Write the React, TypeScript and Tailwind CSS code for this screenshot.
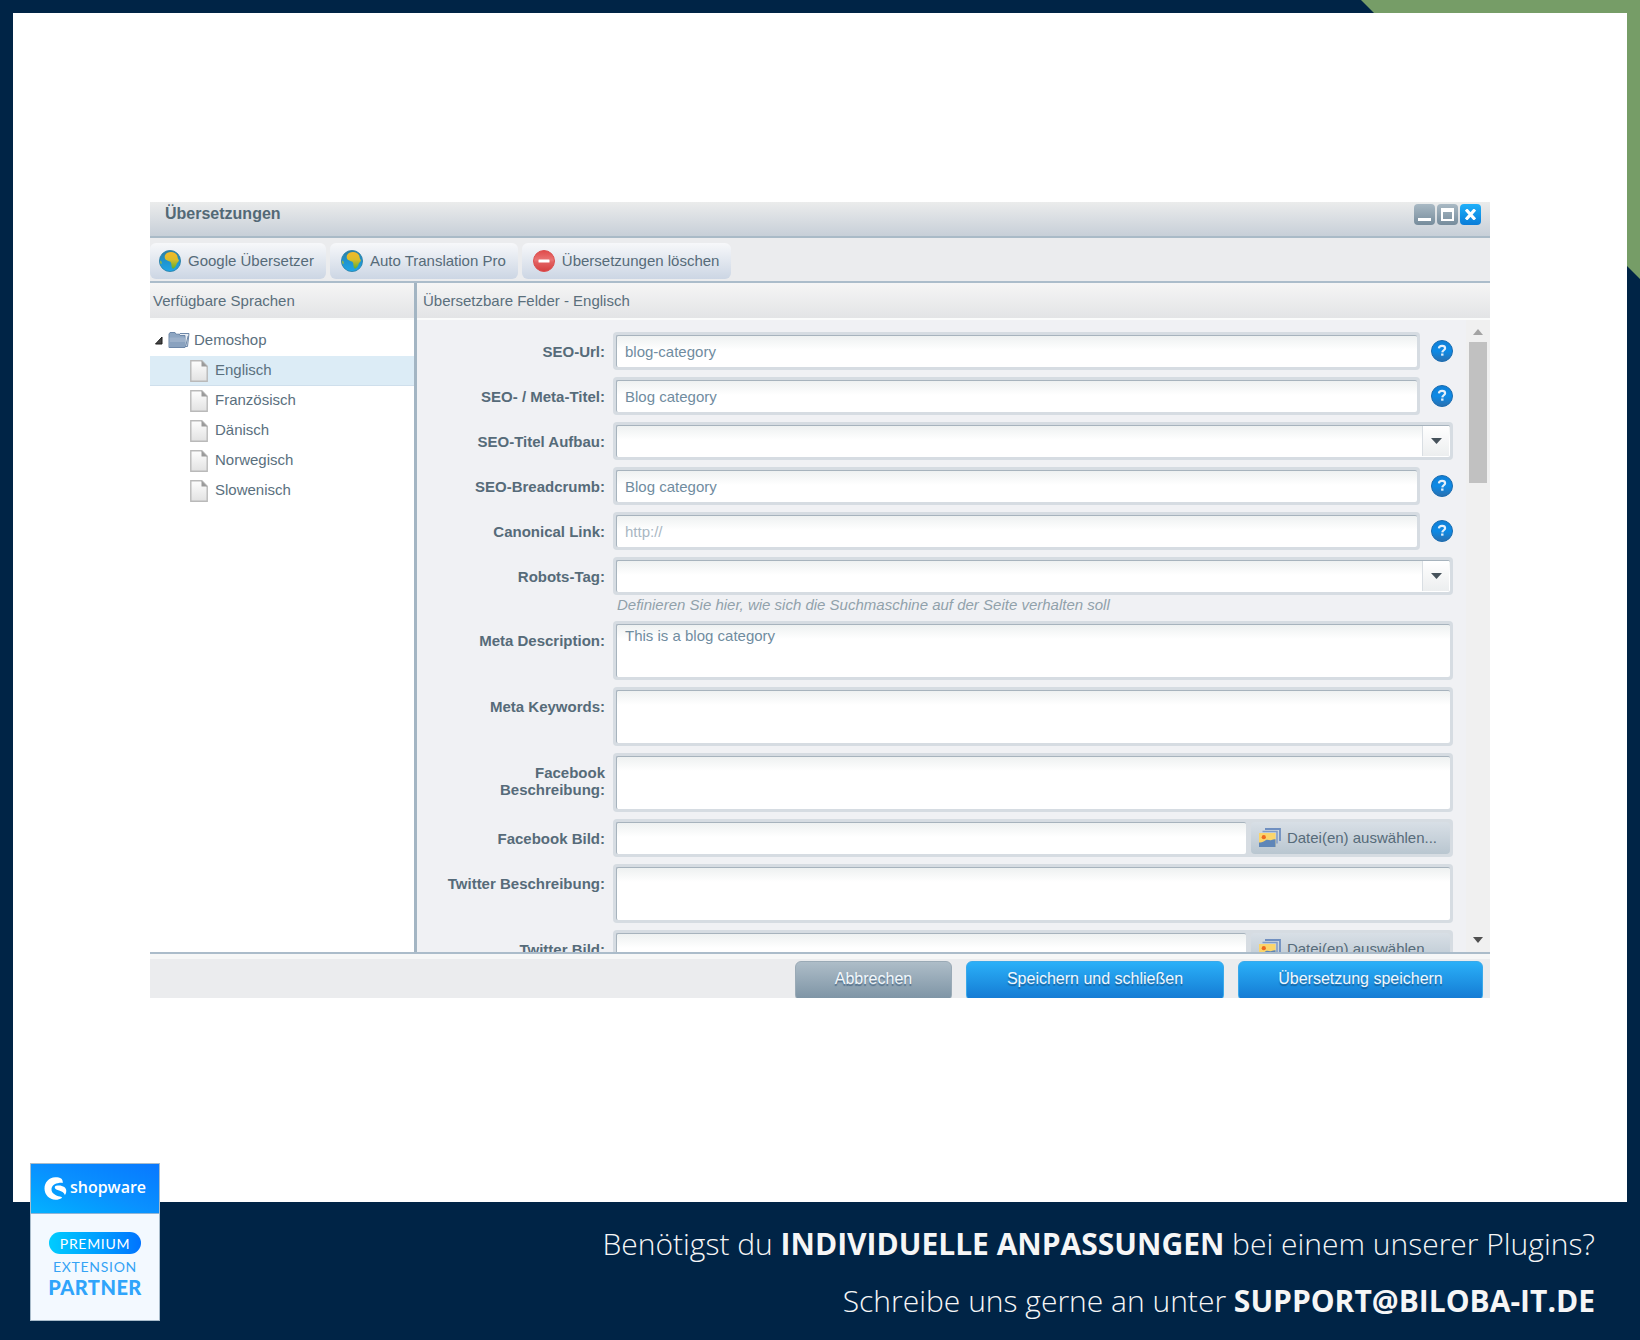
import { useState } from "react";
import type { ReactNode } from "react";

const languages = ["Englisch", "Französisch", "Dänisch", "Norwegisch", "Slowenisch"];

// --- ICONS ---

function GlobeIcon() {
  return (
    <svg width="22" height="22" viewBox="0 0 22 22" aria-hidden="true">
      <defs>
        <linearGradient id="globe-sea" x1="0" y1="0" x2="0" y2="1">
          <stop offset="0" stopColor="#2f7f9f" />
          <stop offset="0.5" stopColor="#1f93cf" />
          <stop offset="1" stopColor="#1fa5e6" />
        </linearGradient>
        <linearGradient id="globe-land" x1="0" y1="0" x2="0" y2="1">
          <stop offset="0" stopColor="#f3b92a" />
          <stop offset="0.45" stopColor="#dcbd2a" />
          <stop offset="1" stopColor="#5fae2e" />
        </linearGradient>
      </defs>
      <circle cx="11" cy="11" r="10.6" fill="url(#globe-sea)" stroke="#2a7fa6" strokeWidth="0.8" />
      <path
        d="M6 5.200C7.200 2.800 9.400 2 12 2c3 0 5 1.300 6.200 3.400l.8 3.600.9.900c.1 1.300-1 2.500-2 3.400-.4 1.800-1.300 3.700-3.100 5.100-1.300.6-2-.5-2.200-1.900l-.4-3.300c-.3-1.200-1.100-1.900-2.300-2L6.800 9.800C5.600 8.700 5.400 6.800 6 5.200z"
        fill="url(#globe-land)"
      />
      <path d="M1.200 10.500c1.100.4 1.700 1.500 1.500 3l-.7.8C1.200 13.400 1 12.200 1.200 10.500z" fill="#9db93a" />
    </svg>
  );
}

function DeleteIcon() {
  return (
    <svg width="22" height="22" viewBox="0 0 22 22" aria-hidden="true">
      <defs>
        <linearGradient id="delete-red" x1="0" y1="0" x2="0" y2="1">
          <stop offset="0" stopColor="#e04a4a" />
          <stop offset="0.45" stopColor="#e97474" />
          <stop offset="0.55" stopColor="#e26161" />
          <stop offset="1" stopColor="#d43f3f" />
        </linearGradient>
      </defs>
      <circle cx="11" cy="11" r="10.5" fill="url(#delete-red)" stroke="#dc5050" />
      <rect x="5.5" y="9.6" width="11" height="2.8" rx="0.5" fill="#fff" />
    </svg>
  );
}

function HelpIcon() {
  return (
    <svg width="22" height="22" viewBox="0 0 22 22" aria-hidden="true">
      <defs>
        <linearGradient id="help-blue" x1="0" y1="0" x2="0" y2="1">
          <stop offset="0" stopColor="#0f7fd6" />
          <stop offset="0.5" stopColor="#0d8ae6" />
          <stop offset="1" stopColor="#2a6fae" />
        </linearGradient>
      </defs>
      <circle cx="11" cy="11" r="10.5" fill="url(#help-blue)" stroke="#1a6cb0" />
      <path
        d="M7.9 8.4c.1-1.700 1.400-2.500 3.200-2.500s3 .9 3 2.300c0 2-2.700 2.100-2.800 4.200"
        fill="none"
        stroke="#e3effa"
        strokeWidth="2.200"
      />
      <rect x="10.100" y="13.500" width="2.400" height="2.200" fill="#e3effa" />
    </svg>
  );
}

function FolderIcon() {
  return (
    <svg width="22" height="18" viewBox="0 0 22 18" aria-hidden="true">
      <path d="M9 4.500h2l1-2h9l-1.500 13H16" fill="#e9eef4" stroke="#6d87a8" />
      <path d="M1 16.500V3l1-1.500h5l1 1.700h3l1 1.300h5v12z" fill="#8ea6c2" stroke="#6d87a8" />
      <path d="M1.500 6.500h15.500v9.500H1.500z" fill="#9db1ca" />
      <path d="M1.500 11h15.500v5H1.500z" fill="#8aa2bf" />
      <path d="M17.500 16l2.600-11" fill="none" stroke="#6d87a8" />
    </svg>
  );
}

function FileIcon() {
  return (
    <svg width="18" height="22" viewBox="0 0 18 22" aria-hidden="true">
      <defs>
        <linearGradient id="file-page" x1="0" y1="0" x2="0" y2="1">
          <stop offset="0" stopColor="#fdfdfd" />
          <stop offset="1" stopColor="#e2e2e2" />
        </linearGradient>
      </defs>
      <path d="M0.8 0.8h11l5.400 5.600v14.800H0.8z" fill="url(#file-page)" stroke="#b9b9b9" strokeWidth="1.400" />
      <path d="M11.500 0.8v5.800h5.700z" fill="#9a9a9a" />
    </svg>
  );
}

function ImagesIcon() {
  return (
    <svg width="22" height="20" viewBox="0 0 22 20" aria-hidden="true">
      <path d="M6 1h15v12" fill="none" stroke="#6f8fc0" strokeWidth="1.800" />
      <path d="M3.500 3.600h14.500v12" fill="none" stroke="#7f9bc8" strokeWidth="1.500" />
      <rect x="0" y="5" width="16.500" height="14" fill="#fbd56b" />
      <circle cx="4.800" cy="9.200" r="2.100" fill="#ee6a1f" />
      <path d="M0 14.500c3 .5 4.500-1 7-2.400 2-.9 3.600.6 5.500-.1 1.500-.5 2.600-.9 4-.7V19H0z" fill="#5f86b8" />
    </svg>
  );
}

function ShopwareMark() {
  return (
    <svg width="23" height="23" viewBox="0 0 23 23" aria-hidden="true">
      <path
        d="M17.500 1.700C15.500.6 13.400.2 11.200.3 5 .6.500 5.300.500 11.500c0 6.400 4.900 11.200 11 11.200 2.400 0 4.500-.6 6.300-1.800.3-.3.2-.6-.3-.9-2-.6-4.200-1-6-2-2.600-1.300-4.300-3.300-4-6.200.4-3.500 3.800-5.700 7.500-5.900 1.300-.1 2.600 0 3.700.2.300-1.600-.2-3.300-1.200-4.400z"
        fill="#fff"
      />
      <path
        d="M12 8.800c3-.8 6-.4 8.300 1.200 1.500 1.200 2.300 3 1.900 5-.2 1.400-.8 2.400-1.300 3-1-2.700-3.200-3.500-5.800-4.400-2-.7-4-1.500-4.300-2.900-.1-.9.300-1.600 1.200-1.900z"
        fill="#fff"
      />
    </svg>
  );
}

// --- FORM ---

interface FieldRowProps {
  id: string;
  label: string;
  children: ReactNode;
}

function FieldRow({ id, label, children }: FieldRowProps) {
  return (
    <div className="flex items-start gap-2">
      <label htmlFor={id} className="w-[188px] shrink-0 pl-6 pt-[11px] text-right font-bold leading-[17px] text-[#566b79]">
        {label}
      </label>
      <div className="flex min-w-0 flex-1 items-start gap-[11px]">{children}</div>
    </div>
  );
}

const frame = "flex min-w-0 flex-1 rounded bg-[#d6dce2] p-[3px]";
const control =
  "block w-full min-w-0 rounded-[2px] border-l border-t border-[#a7b3bd] bg-[linear-gradient(#eef1f1,#ffffff_14px)] px-2 text-[#708c9f] outline-none placeholder:text-[#a9b7c3]";

interface TextFieldProps {
  id: string;
  label: string;
  value?: string;
  placeholder?: string;
}

function TextField({ id, label, value, placeholder }: TextFieldProps) {
  return (
    <FieldRow id={id} label={label}>
      <div className={frame}>
        <input id={id} type="text" defaultValue={value} placeholder={placeholder} className={`${control} h-8`} />
      </div>
      <button type="button" aria-label={`Hilfe: ${label}`} className="mt-2 shrink-0">
        <HelpIcon />
      </button>
    </FieldRow>
  );
}

function SelectField({ id, label }: TextFieldProps) {
  return (
    <FieldRow id={id} label={label}>
      <div className={`${frame} relative`}>
        <select id={id} className={`${control} h-8 appearance-none`} />
        <span className="pointer-events-none absolute bottom-1 right-1 top-1 flex w-[27px] items-center justify-center border-l border-[#d9dee3] bg-linear-to-b from-white to-[#eceeef]">
          <svg width="11" height="6" viewBox="0 0 11 6" aria-hidden="true">
            <path d="M0 0h11L5.500 6z" fill="#46525b" />
          </svg>
        </span>
      </div>
    </FieldRow>
  );
}

function AreaField({ id, label, value }: TextFieldProps) {
  return (
    <FieldRow id={id} label={label}>
      <div className={frame}>
        <textarea id={id} defaultValue={value} className={`${control} h-[53px] resize-none pt-[2px] leading-[18px]`} />
      </div>
    </FieldRow>
  );
}

function MediaField({ id, label }: TextFieldProps) {
  return (
    <FieldRow id={id} label={label}>
      <div className={`${frame} gap-[5px]`}>
        <input id={id} type="text" className={`${control} h-8`} />
        <button
          type="button"
          className="flex h-8 shrink-0 items-center gap-[6px] rounded bg-linear-to-b from-[#d8dfe6] to-[#b9c6d0] pl-2 pr-[13px] text-[#566b79]"
        >
          <ImagesIcon />
          Datei(en) auswählen...
        </button>
      </div>
    </FieldRow>
  );
}

// --- WINDOW ---

const toolButton =
  "flex h-9 items-center gap-[7px] rounded-md bg-linear-to-b from-[#f7f8fa] to-[#ccd6e4] pr-3 text-[#566b79]";
const panelHeader =
  "flex h-[37px] items-center border-b-2 border-[#fafbfb] bg-linear-to-b from-[#f5f5f5] to-[#e3e4e6] pt-[2px] font-normal text-[#5a6f7c]";
const windowButton = "flex h-[21px] w-[21px] items-center justify-center rounded-[4px]";
const footerButton =
  "h-10 rounded-md border pb-1 text-base text-[#f2f7fb] [text-shadow:0_2px_1px_rgba(20,60,100,0.5)]";

function TranslationWindow() {
  const [language, setLanguage] = useState("Englisch");

  return (
    <section className="mx-[137px] flex flex-col overflow-hidden bg-[#ebecee] text-[15px]">
      <header className="flex h-9 items-start justify-between border-b-2 border-[#a9bac7] bg-linear-to-b from-[#ebecec] to-[#c7cfd8] pl-[15px] pr-[9px] pt-[2px]">
        <h1 className="text-base font-bold leading-[19px] text-[#536976]">Übersetzungen</h1>
        <div className="flex gap-[2px]">
          <button type="button" aria-label="Minimieren" className={`${windowButton} bg-linear-to-b from-[#a9b9c4] to-[#768c9c]`}>
            <svg width="13" height="13" viewBox="0 0 13 13" aria-hidden="true">
              <rect y="10" width="13" height="3" fill="#fff" />
            </svg>
          </button>
          <button type="button" aria-label="Maximieren" className={`${windowButton} bg-linear-to-b from-[#a9b9c4] to-[#768c9c]`}>
            <svg width="13" height="13" viewBox="0 0 13 13" aria-hidden="true">
              <path d="M0 0h13v13H0zM2 4v7h9V4z" fill="#fff" fillRule="evenodd" />
            </svg>
          </button>
          <button type="button" aria-label="Schließen" className={`${windowButton} bg-linear-to-b from-[#1fb0fa] to-[#0a7cd8]`}>
            <svg width="11" height="11" viewBox="0 0 11 11" aria-hidden="true">
              <path d="M1 .5l9 10M10 .5l-9 10" stroke="#fff" strokeWidth="3.200" />
            </svg>
          </button>
        </div>
      </header>

      <div className="flex h-[45px] gap-1 border-b-2 border-[#abbcca] pt-[5px]">
        <button type="button" className={`${toolButton} pl-[9px]`}>
          <GlobeIcon />
          Google Übersetzer
        </button>
        <button type="button" className={`${toolButton} pl-[11px]`}>
          <GlobeIcon />
          Auto Translation Pro
        </button>
        <button type="button" className={`${toolButton} pl-[11px]`}>
          <DeleteIcon />
          Übersetzungen löschen
        </button>
      </div>

      <div className="flex h-[671px] border-b-2 border-[#abbcca]">
        <nav className="w-[267px] shrink-0 border-r-[3px] border-[#a3b5c3] bg-white text-[#5a707e]">
          <h2 className={`${panelHeader} pl-[3px]`}>Verfügbare Sprachen</h2>
          <div className="flex h-9 items-center pl-1 pt-1">
            <svg width="9" height="9" viewBox="0 0 9 9" aria-hidden="true">
              <path d="M8 1v7H1.500z" fill="#444" stroke="#1c1c1c" />
            </svg>
            <span className="flex items-center gap-1 pl-[5px]">
              <FolderIcon />
              Demoshop
            </span>
          </div>
          <ul>
            {languages.map((name) => (
              <li key={name}>
                <button
                  type="button"
                  onClick={() => setLanguage(name)}
                  className={`flex h-[30px] w-full items-center gap-[7px] border-b pl-10 ${
                    name === language ? "border-[#cfdfec] bg-[#dcecf6]" : "border-white"
                  }`}
                >
                  <FileIcon />
                  {name}
                </button>
              </li>
            ))}
          </ul>
        </nav>

        <div className="flex min-w-0 flex-1 flex-col bg-[#f0f1f4]">
          <h2 className={`${panelHeader} pl-[6px]`}>Übersetzbare Felder - {language}</h2>
          <div className="flex min-h-0 flex-1">
            <form className="flex min-w-0 flex-1 flex-col gap-[7px] overflow-hidden pr-[13px] pt-3">
              <TextField id="seo-url" label="SEO-Url:" value="blog-category" />
              <TextField id="meta-title" label="SEO- / Meta-Titel:" value="Blog category" />
              <SelectField id="title-structure" label="SEO-Titel Aufbau:" />
              <TextField id="breadcrumb" label="SEO-Breadcrumb:" value="Blog category" />
              <TextField id="canonical" label="Canonical Link:" placeholder="http://" />
              <div>
                <SelectField id="robots" label="Robots-Tag:" />
                <p className="pl-[200px] pt-px italic leading-[18px] text-[#91a1ab]">
                  Definieren Sie hier, wie sich die Suchmaschine auf der Seite verhalten soll
                </p>
              </div>
              <AreaField id="meta-description" label="Meta Description:" value="This is a blog category" />
              <AreaField id="meta-keywords" label="Meta Keywords:" />
              <AreaField id="facebook-text" label="Facebook Beschreibung:" />
              <MediaField id="facebook-image" label="Facebook Bild:" />
              <AreaField id="twitter-text" label="Twitter Beschreibung:" />
              <MediaField id="twitter-image" label="Twitter Bild:" />
            </form>
            <div className="flex w-6 shrink-0 flex-col items-center bg-[#f0f0f0] pb-[9px] pt-[9px]">
              <svg width="10" height="6" viewBox="0 0 10 6" aria-hidden="true">
                <path d="M0 6h10L5 0z" fill="#a3a3a3" />
              </svg>
              <div className="mt-[7px] h-[141px] w-[18px] bg-[#c1c1c1]" />
              <svg width="10" height="6" viewBox="0 0 10 6" aria-hidden="true" className="mt-auto">
                <path d="M0 0h10L5 6z" fill="#505050" />
              </svg>
            </div>
          </div>
        </div>
      </div>

      <footer className="flex h-11 items-start justify-end gap-[14px] border-t-[5px] border-[#f6f7f7] pr-[7px] pt-[2px]">
        <button type="button" className={`${footerButton} w-[157px] border-[#9aaab6] bg-linear-to-b from-[#aebdc8] to-[#7c93a4]`}>
          Abbrechen
        </button>
        <button type="button" className={`${footerButton} w-[258px] border-[#3aa9ea] bg-linear-to-b from-[#2bb0f8] to-[#1579d2]`}>
          Speichern und schließen
        </button>
        <button type="button" className={`${footerButton} w-[245px] border-[#3aa9ea] bg-linear-to-b from-[#2bb0f8] to-[#1579d2]`}>
          Übersetzung speichern
        </button>
      </footer>
    </section>
  );
}

function PartnerBadge() {
  return (
    <div className="absolute bottom-[19px] left-[30px] flex h-[158px] w-[130px] flex-col items-center border border-[#a9bccb] bg-[#f3f9ff] font-['Lato',sans-serif]">
      <div className="flex h-[50px] w-full items-center justify-center gap-[3px] border-b border-[#8fb4d6] bg-linear-to-tr from-[#06b2ff] via-[#0a90ff] to-[#0a78ff]">
        <ShopwareMark />
        <span className="pb-1 font-['Open_Sans',sans-serif] text-base font-semibold leading-5 text-white">shopware</span>
      </div>
      <span className="mt-[18px] flex h-[22px] w-[92px] items-center justify-center rounded-full bg-linear-to-r from-[#00ccff] to-[#0073ff] text-[14px] tracking-wider text-white">
        PREMIUM
      </span>
      <span className="mt-1 text-[14px] leading-[18px] tracking-wider text-[#35a3f5]">EXTENSION</span>
      <span className="text-[20px] font-black leading-[22px] tracking-wide text-[#2fa4fb]">PARTNER</span>
    </div>
  );
}

export default function App() {
  return (
    <div className="relative flex min-h-screen flex-col bg-[#002446] px-[13px] pt-[13px] font-['Liberation_Sans',Arial,sans-serif]">
      {/* green corner behind the white card */}
      <div className="absolute right-0 top-0 h-[279px] w-[279px] bg-[#769d67] [clip-path:polygon(0_0,100%_0,100%_100%)]" />

      <main className="relative flex-1 bg-white pb-[120px] pt-[189px]">
        <TranslationWindow />
      </main>

      <footer className="flex h-[138px] flex-col items-end justify-center gap-[13px] pr-8 pt-[2px] text-right font-['Open_Sans',sans-serif] text-[30px] font-light leading-[44px] text-[#f6f6f6]">
        <p>
          Benötigst du <strong className="font-bold">INDIVIDUELLE ANPASSUNGEN</strong> bei einem unserer Plugins?
        </p>
        <p>
          Schreibe uns gerne an unter{" "}
          <a href="mailto:support@biloba-it.de" className="font-bold">
            SUPPORT@BILOBA-IT.DE
          </a>
        </p>
      </footer>

      <PartnerBadge />
    </div>
  );
}
